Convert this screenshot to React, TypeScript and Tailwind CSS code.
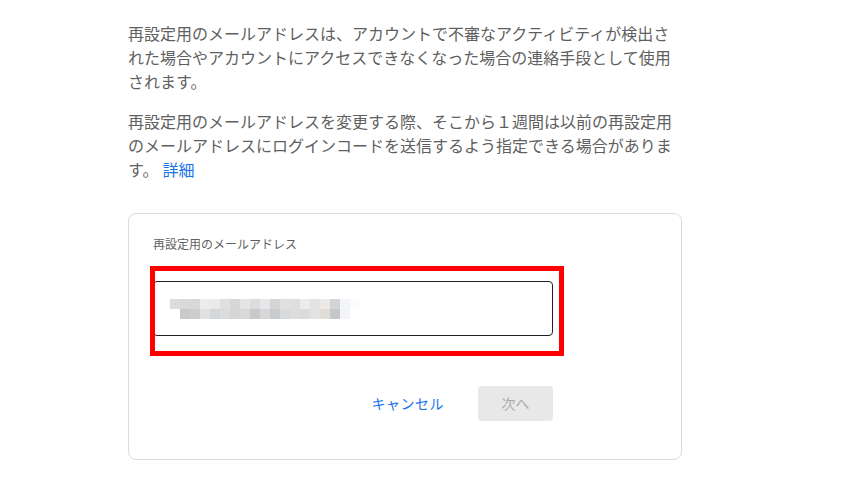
const rowA = [
  'bg-[#dcdcdc]', 'bg-[#dadada]', 'bg-[#d8d8d8]', 'bg-[#ebecee]', 'bg-[#eaeaea]', 'bg-[#e0e0e0]',
  'bg-[#d7d7d7]', 'bg-[#e5e5e5]', 'bg-[#dcdcdc]', 'bg-[#e6e7ea]', 'bg-[#d5d5d5]', 'bg-[#e0e0e0]',
  'bg-[#dedede]', 'bg-[#ececee]', 'bg-[#e3e3e3]', 'bg-[#ede9e6]', 'bg-[#d3d4d6]', 'bg-[#f4f5f8]',
  'bg-[#fafbfd]',
]

const rowB = [
  'bg-[#c9c9cb]', 'bg-[#cdcdcd]', 'bg-[#e1e1e1]', 'bg-[#d3d6da]', 'bg-[#dcdcdc]', 'bg-[#d6d6d6]',
  'bg-[#d9d9d9]', 'bg-[#c9c9cb]', 'bg-[#d8d8d8]', 'bg-[#cacbcd]', 'bg-[#d9dadc]', 'bg-[#dddddd]',
  'bg-[#dbdbdb]', 'bg-[#e1e2e4]', 'bg-[#e0dcd8]', 'bg-[#c5c7ca]', 'bg-[#f3f4f6]',
]

// pixelated (blurred) email address
function Mosaic() {
  return (
    <div className="flex flex-col">
      <div className="flex">
        {rowA.map((c, i) => (
          <div key={i} className={`w-[10px] h-[10px] ${c}`} />
        ))}
      </div>
      <div className="flex pl-[10px]">
        {rowB.map((c, i) => (
          <div key={i} className={`w-[10px] h-[10px] ${c}`} />
        ))}
      </div>
    </div>
  )
}

export default function App() {
  return (
    <div
      className="min-h-[500px] bg-white pl-[128px] pt-[21px] text-[#5f5f5f]"
      style={{ fontFamily: '"Noto Sans CJK JP", "Noto Sans", sans-serif' }}
    >
      <div className="w-[554px]">
        <p className="text-[16px] leading-[24px]">
          再設定用のメールアドレスは、アカウントで不審なアクティビティが検出された場合やアカウントにアクセスできなくなった場合の連絡手段として使用されます。
        </p>
        <p className="mt-4 text-[16px] leading-[24px]">
          再設定用のメールアドレスを変更する際、そこから１週間は以前の再設定用のメールアドレスにログインコードを送信するよう指定できる場合があります。
          <a className="ml-1 text-[#1a73e8]">詳細</a>
        </p>

        <div className="mt-8 rounded-lg border border-[#dadce0] pt-[22px] pb-[38px] pl-6">
          <div className="w-[400px]">
            <label className="block text-[12px] leading-4 text-[#5f5f5f]">再設定用のメールアドレス</label>

            <div className="relative mt-[29px]">
              <div className="flex h-[55px] items-center rounded border border-[#202124] pl-4">
                <Mosaic />
              </div>
              <div className="absolute left-[-3px] top-[-15px] h-[90px] w-[414px] border-[5px] border-[#ff0000]" />
            </div>

            <div className="mt-[50px] flex items-center justify-end">
              <button className="mr-[34px] text-[14px] tracking-[0.5px] text-[#1a73e8]">キャンセル</button>
              <button className="h-[35px] w-[75px] rounded bg-[#e8e8e8] text-[14px] text-[#ababab]">次へ</button>
            </div>
          </div>
        </div>
      </div>
    </div>
  )
}
